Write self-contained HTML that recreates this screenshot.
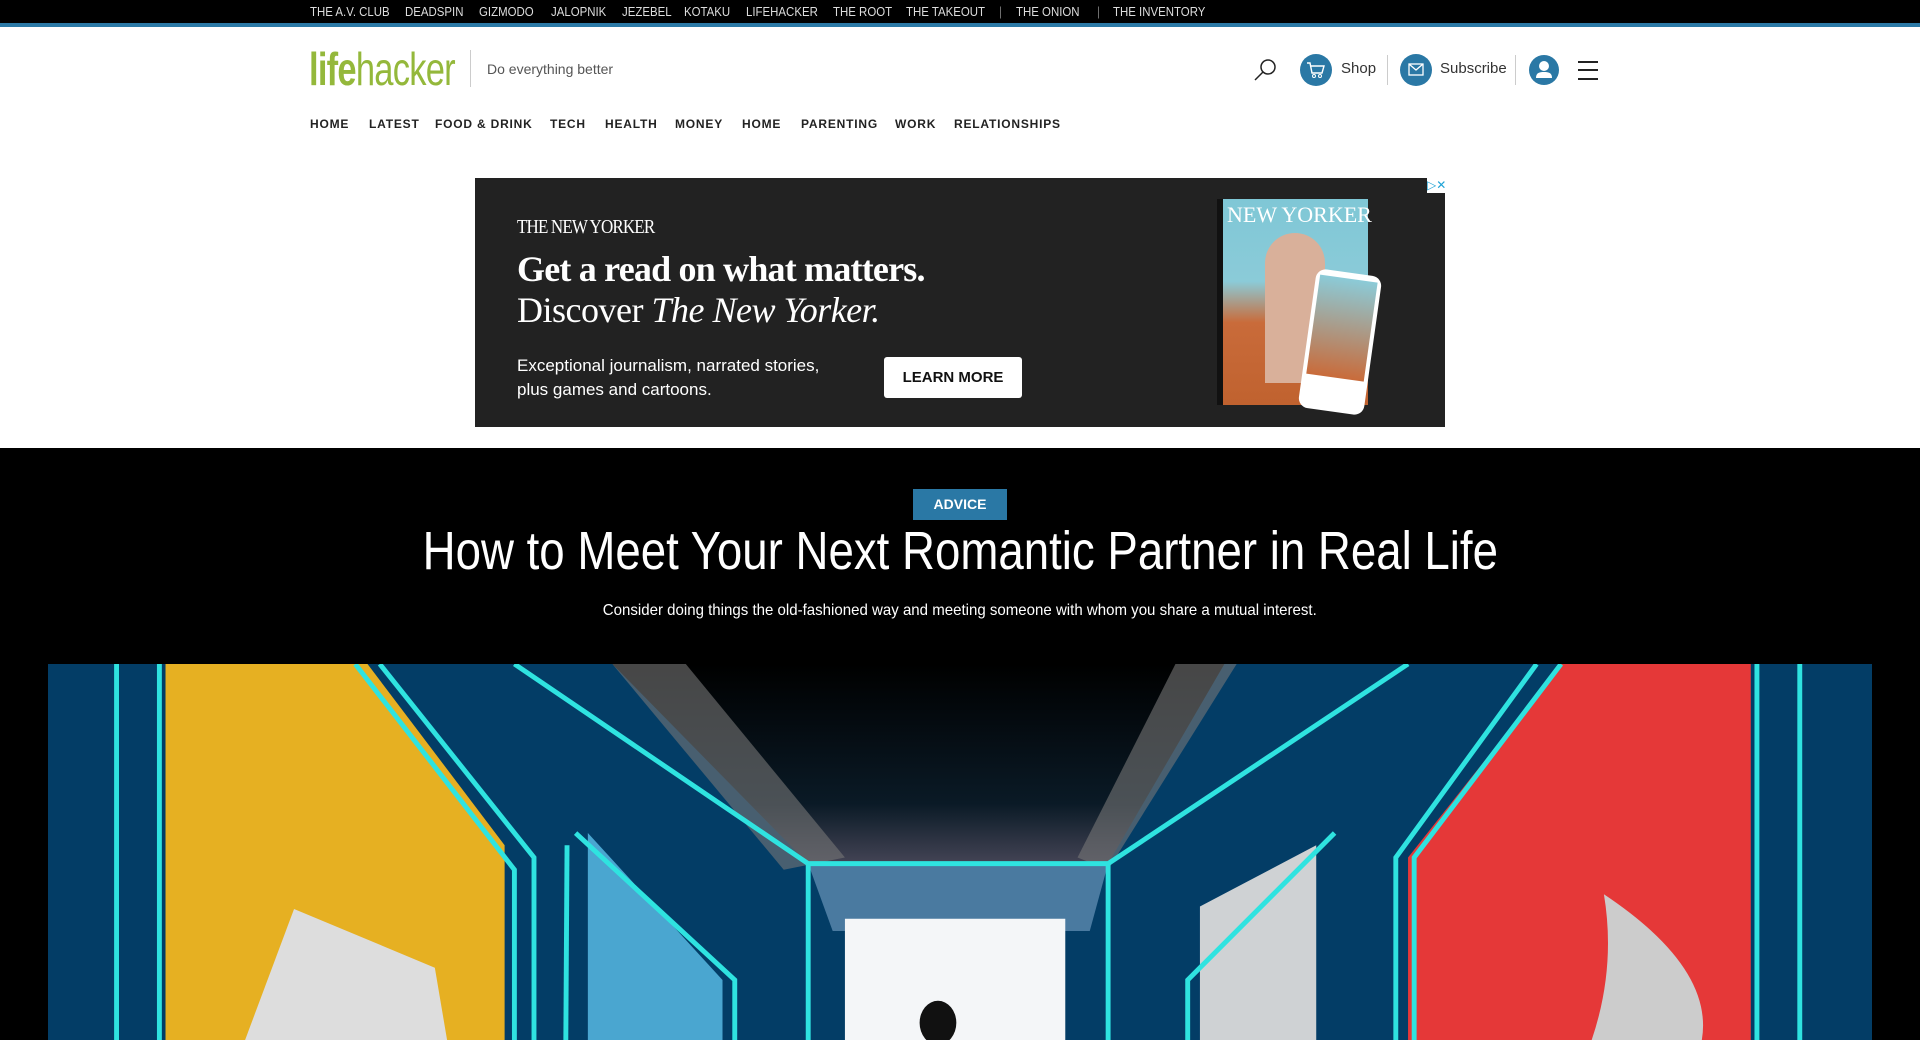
<!DOCTYPE html>
<html><head><meta charset="utf-8"><style>
*{margin:0;padding:0;box-sizing:border-box}
body{width:1920px;height:1040px;overflow:hidden;background:#fff;font-family:"Liberation Sans",sans-serif;position:relative}
.a{position:absolute;white-space:nowrap}
.top{position:absolute;left:0;top:0;width:1920px;background:#000;border-bottom:4px solid #2b79a6;height:27px}
.top span{position:absolute;top:4px;color:#ddd;font-size:13px;transform:scaleX(.88);transform-origin:left}
.nav span{position:absolute;top:117px;font-size:12px;font-weight:bold;letter-spacing:.8px;color:#222}
.circ{position:absolute;border-radius:50%;background:#2a78a5}
</style></head><body>
<div class="top">
<span style="left:310px">THE A.V. CLUB</span><span style="left:405px">DEADSPIN</span><span style="left:479px">GIZMODO</span><span style="left:551px">JALOPNIK</span><span style="left:622px">JEZEBEL</span><span style="left:684px">KOTAKU</span><span style="left:746px">LIFEHACKER</span><span style="left:833px">THE ROOT</span><span style="left:906px">THE TAKEOUT</span><span style="left:999px;color:#777">|</span><span style="left:1016px">THE ONION</span><span style="left:1097px;color:#777">|</span><span style="left:1113px">THE INVENTORY</span>
</div>
<div class="a" style="left:309px;top:42px;font-size:46px;color:#94b83b;letter-spacing:-1px;transform:scaleX(.75);transform-origin:left"><b>life</b>hacker</div>
<div class="a" style="left:470px;top:50px;width:1px;height:37px;background:#ccc"></div>
<div class="a" style="left:487px;top:61px;font-size:14px;color:#555">Do everything better</div>
<svg class="a" style="left:1252px;top:57px" width="26" height="26" viewBox="0 0 26 26"><circle cx="16" cy="10" r="7" fill="none" stroke="#222" stroke-width="1.5"/><line x1="11" y1="15" x2="3" y2="23" stroke="#222" stroke-width="1.5"/></svg>
<div class="circ" style="left:1300px;top:54px;width:32px;height:32px"></div>
<svg class="a" style="left:1305px;top:60px" width="22" height="20" viewBox="0 0 22 20"><path d="M2 3h3l2 10h10l2-7H6" fill="none" stroke="#fff" stroke-width="1.4"/><circle cx="9" cy="16" r="1.5" fill="none" stroke="#fff"/><circle cx="15" cy="16" r="1.5" fill="none" stroke="#fff"/></svg>
<div class="a" style="left:1341px;top:60px;font-size:15px;color:#333">Shop</div>
<div class="a" style="left:1387px;top:55px;width:1px;height:30px;background:#ccc"></div>
<div class="circ" style="left:1400px;top:54px;width:32px;height:32px"></div>
<svg class="a" style="left:1408px;top:63px" width="16" height="14" viewBox="0 0 16 14"><rect x="1" y="1" width="14" height="11" fill="none" stroke="#fff" stroke-width="1.3"/><path d="M1 1l7 6 7-6" fill="none" stroke="#fff" stroke-width="1.3"/></svg>
<div class="a" style="left:1440px;top:60px;font-size:15px;color:#333">Subscribe</div>
<div class="a" style="left:1515px;top:55px;width:1px;height:30px;background:#ccc"></div>
<div class="circ" style="left:1529px;top:55px;width:30px;height:30px"></div>
<svg class="a" style="left:1529px;top:55px" width="30" height="30" viewBox="0 0 30 30"><circle cx="15" cy="11" r="5" fill="#fff"/><path d="M7 23c0-5 3-6 8-6s8 1 8 6z" fill="#fff"/></svg>
<div class="a" style="left:1578px;top:61px;width:20px;height:1.5px;background:#222"></div>
<div class="a" style="left:1578px;top:69px;width:20px;height:1.5px;background:#222"></div>
<div class="a" style="left:1578px;top:78px;width:20px;height:1.5px;background:#222"></div>
<div class="nav">
<span style="left:310px">HOME</span><span style="left:369px">LATEST</span><span style="left:435px">FOOD &amp; DRINK</span><span style="left:550px">TECH</span><span style="left:605px">HEALTH</span><span style="left:675px">MONEY</span><span style="left:742px">HOME</span><span style="left:801px">PARENTING</span><span style="left:895px">WORK</span><span style="left:954px">RELATIONSHIPS</span>
</div>
<div class="a" style="left:475px;top:178px;width:970px;height:249px;background:#222">
<div class="a" style="left:42px;top:38px;font-family:'Liberation Serif',serif;font-size:20px;color:#fff;letter-spacing:-1px;transform:scaleX(.85);transform-origin:left">THE NEW YORKER</div>
<div class="a" style="left:42px;top:70px;font-family:'Liberation Serif',serif;font-size:36px;font-weight:bold;color:#fff;letter-spacing:-.8px">Get a read on what matters.</div>
<div class="a" style="left:42px;top:111px;font-family:'Liberation Serif',serif;font-size:36px;color:#fff;letter-spacing:-.5px">Discover <i>The New Yorker.</i></div>
<div class="a" style="left:42px;top:176px;font-size:17px;color:#fff;line-height:24px">Exceptional journalism, narrated stories,<br>plus games and cartoons.</div>
<div class="a" style="left:409px;top:179px;width:138px;height:41px;background:#fff;border-radius:3px;font-size:15px;font-weight:bold;color:#111;text-align:center;line-height:41px">LEARN MORE</div>
<div class="a" style="left:742px;top:21px;width:151px;height:206px;background:linear-gradient(#7fc7d6,#8bcbd8 40%,#c96b3a 60%,#c0622f);border-left:6px solid #111"></div>
<div class="a" style="left:790px;top:55px;width:60px;height:150px;border-radius:30px 30px 0 0;background:#d9b09a"></div>
<div class="a" style="left:752px;top:24px;font-family:'Liberation Serif',serif;font-size:22px;color:#fff">NEW YORKER</div>
<div class="a" style="left:832px;top:94px;width:66px;height:140px;background:#fff;border-radius:10px;transform:rotate(8deg);padding:6px 4px"><div style="width:100%;height:100px;background:linear-gradient(#8bcbd8,#c96b3a)"></div></div>
<div class="a" style="left:952px;top:0;width:18px;height:15px;background:#fff;color:#1fa3d6;font-size:12px;line-height:15px;text-align:center">▷✕</div>
</div>
<div class="a" style="left:0;top:448px;width:1920px;height:592px;background:#000"></div>
<div class="a" style="left:913px;top:489px;width:94px;height:31px;background:#2a78a5;color:#fff;font-size:14px;font-weight:bold;text-align:center;line-height:31px">ADVICE</div>
<div class="a" style="left:0;top:520px;width:1920px;text-align:center;color:#fff;font-size:54px"><span style="display:inline-block;transform:scaleX(.845)">How to Meet Your Next Romantic Partner in Real Life</span></div>
<div class="a" style="left:0;top:602px;width:1920px;text-align:center;color:#fff;font-size:16px"><span style="display:inline-block;transform:scaleX(.94)">Consider doing things the old-fashioned way and meeting someone with whom you share a mutual interest.</span></div>
<svg class="a" style="left:48px;top:664px" width="1824" height="376" viewBox="39 542 1490 307" preserveAspectRatio="none">
<defs><linearGradient id="c" x1="0" y1="0" x2="0" y2="1"><stop offset="0" stop-color="#000"/><stop offset=".7" stop-color="#0a1a26"/><stop offset="1" stop-color="#445"/></linearGradient></defs>
<rect x="39" y="542" width="1490" height="307" fill="#033d66"/>
<polygon points="135,542 300,542 412,690 412,849 135,849" fill="#e6b022"/>
<polygon points="1275,542 1430,542 1430,849 1150,849 1150,700" fill="#e53838"/>
<polygon points="500,542 1000,542 905,705 660,705" fill="url(#c)"/>
<polygon points="500,542 560,542 690,700 640,710" fill="#777" opacity=".6"/>
<polygon points="960,542 1010,542 905,710 880,700" fill="#777" opacity=".6"/>
<polygon points="660,705 905,705 890,760 680,760" fill="#4a7aa0"/>
<rect x="690" y="750" width="180" height="99" fill="#f4f6f8"/>
<polygon points="480,680 590,800 590,849 480,849" fill="#4aa6d0"/>
<polygon points="980,740 1075,690 1075,849 980,849" fill="#cfd2d4"/>
<polygon points="240,742 355,790 365,849 200,849" fill="#ddd"/>
<path d="M1310 730 Q1400 790 1390 849 L1300 849 Q1320 790 1310 730z" fill="#ccc"/>
<g fill="none" stroke="#2fe3e0" stroke-width="4">
<line x1="95" y1="542" x2="95" y2="849"/><line x1="130" y1="542" x2="130" y2="849"/>
<polyline points="290,542 420,710 420,849"/><polyline points="310,542 436,700 436,849"/>
<polyline points="470,680 600,800 600,849"/><polyline points="463,690 462,849"/>
<polyline points="420,542 660,705 905,705 1150,542"/>
<line x1="660" y1="705" x2="660" y2="849"/><line x1="905" y1="705" x2="905" y2="849"/>
<polyline points="1255,542 1140,700 1140,849"/><polyline points="1275,542 1155,700 1155,849"/>
<polyline points="1090,680 970,800 970,849"/>
<line x1="1435" y1="542" x2="1435" y2="849"/><line x1="1470" y1="542" x2="1470" y2="849"/>
</g>
<ellipse cx="766" cy="835" rx="15" ry="18" fill="#111"/>
</svg>
</body></html>
